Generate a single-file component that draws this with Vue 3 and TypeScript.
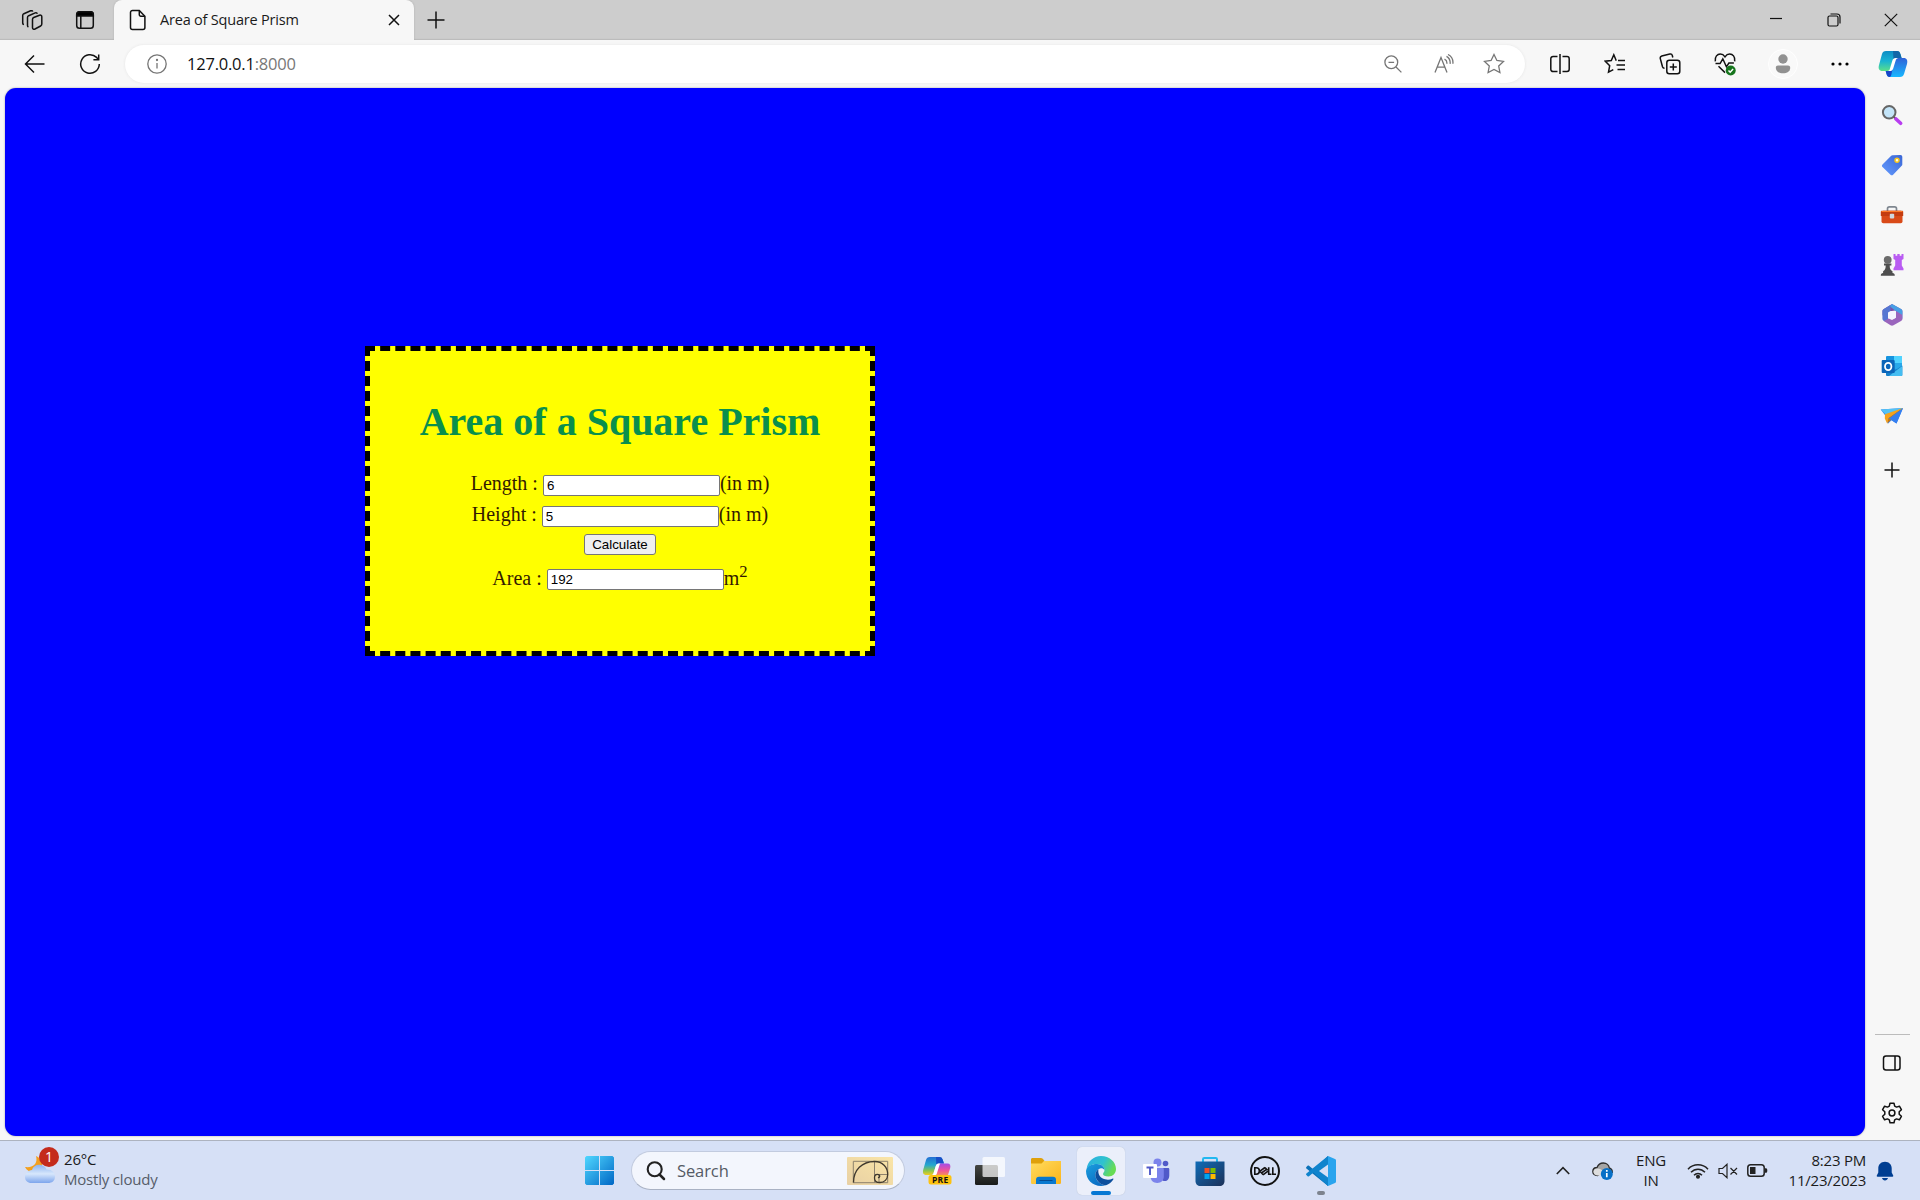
<script setup lang="ts">
import { ref } from 'vue'

const length = ref('6')
const height = ref('5')
const area = ref('192')

function calculate(): void {
  const a = Number(length.value)
  const h = Number(height.value)
  area.value = String(2 * a * a + 4 * a * h)
}
</script>

<template>
  <div class="desktop">
    <header class="tabstrip">
      <div class="strip-icon first">
        <svg width="22" height="22" viewBox="0 0 22 22" class="line">
          <path d="M11.500 10.300c0-.9.500-1.500 1.200-1.800l5.800-2.300c1.200-.4 2.300.3 2.300 1.600v7.300c0 .8-.4 1.500-1.200 1.900l-5.600 3c-1.200.6-2.500 0-2.500-1.300z" />
          <path d="M7.400 18a1.700 1.700 0 0 1-.9-1.500V8.600c0-.8.400-1.500 1.200-1.900l6.500-2.800c1-.4 1.900 0 2.100.8" />
          <path d="M2.900 15.600a1.700 1.700 0 0 1-1.200-1.500V6.600c0-.8.400-1.500 1.200-1.900l6.700-2.900c1-.4 1.900 0 2.100.8" />
        </svg>
      </div>
      <div class="strip-icon second">
        <svg width="20" height="20" viewBox="0 0 20 20" class="line">
          <rect x="1.700" y="1.700" width="16.600" height="16.600" rx="2.800" />
          <path d="M1.700 6V4.500a2.800 2.800 0 0 1 2.800-2.800h11a2.800 2.800 0 0 1 2.800 2.800V6z" fill="#000" />
          <path d="M5.800 6v12" />
        </svg>
      </div>
      <div class="tab">
        <svg class="file line" width="18" height="22" viewBox="0 0 18 22">
          <path d="M3.500 1.500h6.800l5.600 5.700v11.300a2 2 0 0 1-2 2H3.500a2 2 0 0 1-2-2v-15a2 2 0 0 1 2-2z" />
          <path d="M10.300 1.500v4.200a1.500 1.500 0 0 0 1.500 1.500h4.100" />
        </svg>
        <span class="tab-title">Area of Square Prism</span>
        <svg class="tab-close line" width="12" height="12" viewBox="0 0 12 12"><path d="m1 1 10 10M11 1 1 11" /></svg>
      </div>
      <svg class="plus line" width="18" height="18" viewBox="0 0 18 18"><path d="M9 .5v17M.5 9h17" /></svg>
      <div class="window-buttons">
        <span><svg width="12" height="12" viewBox="0 0 12 12" class="line thin"><path d="M0 5.500h12" /></svg></span>
        <span><svg width="14" height="14" viewBox="0 0 14 14" class="line thin"><rect x="1" y="3" width="10" height="10" rx="1.500" /><path d="M3.500 1h6.500a3 3 0 0 1 3 3v6.500" /></svg></span>
        <span><svg width="14" height="14" viewBox="0 0 14 14" class="line thin"><path d="m.8.8 12.400 12.400M13.200.8.8 13.200" /></svg></span>
      </div>
    </header>

    <nav class="toolbar">
      <span class="tool"><svg width="22" height="20" viewBox="0 0 22 20" class="line"><path d="M20.500 10H1.500M10 1.500 1.500 10l8.500 8.500" /></svg></span>
      <span class="tool"><svg width="22" height="22" viewBox="0 0 22 22" class="line"><path d="M20.300 11a9.300 9.300 0 1 1-2.700-6.600L19.500 6.500M19.700 1.500v5.300h-5.300" /></svg></span>
      <div class="address">
        <svg class="info line grey" width="20" height="20" viewBox="0 0 20 20"><circle cx="10" cy="10" r="9.200" /><path d="M10 9v5.500" /><circle cx="10" cy="6" r=".5" fill="#6c6c6c" /></svg>
        <span class="url">127.0.0.1<span class="port">:8000</span></span>
        <div class="address-icons">
          <svg width="18" height="18" viewBox="0 0 18 18" class="line grey"><circle cx="7.300" cy="7.300" r="6.400" /><path d="m12 12 5.400 5.400M4.500 7.300h5.600" /></svg>
          <svg width="20" height="20" viewBox="0 0 20 20" class="line grey"><path d="M1 18.500 7 3.500l6 15M3.300 13.200h7.500M10.500 5.200c1.800.9 2.600 2.500 2.400 4.500M12.500 2.400c2.800 1.600 4 4.300 3.600 7.500M14 .5c3.600 1.800 5.300 5.200 4.900 9.300" /></svg>
          <svg width="22" height="22" viewBox="0 0 22 22" class="line grey"><path d="m11 1.500 2.900 6 6.600.9-4.800 4.600 1.200 6.500-5.900-3.100-5.900 3.100 1.200-6.500L1.500 8.400l6.600-.9z" /></svg>
        </div>
      </div>
      <div class="tools-right">
        <span class="tool"><svg width="22" height="22" viewBox="0 0 22 22" class="line"><path d="M11 1v20M8.500 3.500H4A2.200 2.200 0 0 0 1.800 5.700v10.600A2.200 2.200 0 0 0 4 18.500h4.500M13.500 3.500H18a2.200 2.200 0 0 1 2.200 2.200v10.600a2.200 2.200 0 0 1-2.200 2.200h-4.500" /></svg></span>
        <span class="tool"><svg width="22" height="22" viewBox="0 0 22 22" class="line"><path d="M12.500 7.300h-.4L9.800 1.800 7.300 7.500l-6 .7 4.400 4.500-1.200 6.500 4.800-2.600M14 7.500h7M12.500 12H21M13.500 16.500H21" /></svg></span>
        <span class="tool"><svg width="22" height="22" viewBox="0 0 22 22" class="line"><rect x="7.800" y="7.300" width="13" height="13.500" rx="2.500" /><path d="M14.300 10.500v7M10.800 14h7M5.500 15.300c-1.300 0-1.700-.6-2-1.500L1.300 5.600c-.3-1.300.3-2.200 1.500-2.600l8-2c1.200-.3 2.200.3 2.500 1.500l.5 2" /></svg></span>
        <span class="tool"><svg width="22" height="24" viewBox="0 0 22 24" class="line"><path d="M1.300 9.300C.6 4.500 3.400 2 6.300 2c2 0 3.500 1 4.700 2.800C12.200 3 13.700 2 15.700 2c2.900 0 5.700 2.500 5 7.300M1.500 11.500h4.600l2.700-4.700 3.600 8 2.500-3.800h5M4.500 14.300l6.500 6.300" /><circle cx="16.700" cy="18.500" r="5" fill="#16751d" stroke="none" /><path d="m14.500 18.500 1.700 1.700 2.900-3.200" stroke="#fff" /></svg></span>
        <span class="tool profile"><i><svg width="16" height="20" viewBox="0 0 16 20" fill="#919191"><circle cx="8" cy="5" r="4.700" /><path d="M3 11.500h10c1.300 0 2.200.9 2.200 2.200 0 3.600-3.200 5.600-7.200 5.600S.8 17.300.8 13.700C.8 12.400 1.700 11.500 3 11.500z" /></svg></i></span>
        <span class="tool dots"><svg width="18" height="4" viewBox="0 0 18 4"><circle cx="2" cy="2" r="1.600" /><circle cx="9" cy="2" r="1.600" /><circle cx="16" cy="2" r="1.600" /></svg></span>
        <span class="tool copilot">
          <svg width="30" height="28" viewBox="0 0 30 28">
            <defs>
              <linearGradient id="cpA" x1="0" y1="0" x2="0" y2="1"><stop offset="0" stop-color="#0d8cc4" /><stop offset=".5" stop-color="#19b3d3" /><stop offset="1" stop-color="#5be08a" /></linearGradient>
              <linearGradient id="cpB" x1="0" y1="0" x2="0" y2="1"><stop offset="0" stop-color="#2f62d8" /><stop offset="1" stop-color="#18b8ff" /></linearGradient>
            </defs>
            <path d="M8 1h11c2 0 2.800 1 3.400 3l1.200 4h-4.400c-2 0-3 1-3.600 3l-2.200 7.500c-.6 1.800-1.600 2.500-3.400 2.500H4.500C1 21 0 18.500 1 15L4 4c.6-2 1.800-3 4-3z" fill="url(#cpA)" />
            <path d="M15 1h4c2 0 2.800 1 3.400 3l1.200 4h-4.400c-2 0-2.900.8-3.600 3z" fill="#1267a8" />
            <path d="M22 27H12c-2 0-3-1-3.500-3l-.8-3H11c1.700 0 2.700-.8 3.200-2.500L16.700 11c.6-2 1.600-3 3.500-3h5.300c3.500 0 4.400 2.600 3.500 6l-3 10c-.6 2-1.800 3-4 3z" fill="url(#cpB)" />
            <path d="M7.700 21H11c1.700 0 2.700-.8 3.200-2.500L15 16l-1.500 8c-.3 2-1 3-2 3-1.600 0-2.500-1-3-3z" fill="#1746c7" />
            <path d="M14.300 10.800c.6-1.900 1.600-2.800 3.400-2.800h2.600c-1.600.2-2.200 1.200-2.700 2.700l-2.300 7.500c-.6 1.900-1.600 2.800-3.300 2.800H9.800c1.200-.2 1.700-1 2.100-2.300z" fill="#fff" />
          </svg>
        </span>
      </div>
    </nav>

    <main class="main">
      <section class="page">
        <form class="card" @submit.prevent="calculate">
          <h1>Area of a Square Prism</h1>
          <div class="row"><label>Length :</label><input v-model="length" type="text" /><span>(in m)</span></div>
          <div class="row second-row"><label>Height :</label><input v-model="height" type="text" /><span>(in m)</span></div>
          <div class="action"><button type="submit">Calculate</button></div>
          <div class="row"><label>Area :</label><input v-model="area" class="result" type="text" /><span>m<sup>2</sup></span></div>
        </form>
      </section>

      <aside class="sidebar">
        <span class="side"><svg width="22" height="22" viewBox="0 0 22 22"><path d="m12.500 12.500 3 3" stroke="#555" stroke-width="2" /><path d="m15 15 4.600 4.300" stroke="#b83df0" stroke-width="3.600" stroke-linecap="round" /><circle cx="8.200" cy="8.300" r="6.300" fill="#c3e4f8" stroke="#666" stroke-width="2" /></svg></span>
        <span class="side"><svg width="22" height="22" viewBox="0 0 22 22"><defs><linearGradient id="tag" x1="1" y1="0" x2="0" y2="1"><stop stop-color="#3a66d5" /><stop offset="1" stop-color="#649bff" /></linearGradient></defs><path d="M11.500 1.200 19.500 1a1.800 1.800 0 0 1 1.800 1.800v7.700c0 .5-.2 1-.6 1.300l-8.600 8.900c-.8.8-1.800.8-2.600 0l-8-7.700c-.8-.8-.8-1.800 0-2.600l8.700-8.600c.4-.4.800-.6 1.300-.6z" fill="url(#tag)" /><circle cx="16" cy="6.200" r="2" fill="#ffd" stroke="#f8c41d" stroke-width="1.500" /></svg></span>
        <span class="side"><svg width="24" height="20" viewBox="0 0 24 20"><path d="M7.500 6V3.700c0-1.200.7-1.900 1.900-1.900h5.200c1.200 0 1.900.7 1.900 1.900V6" fill="none" stroke="#7f8790" stroke-width="1.700" /><rect x="1.500" y="5.800" width="21" height="12.400" rx="1.800" fill="#d94a18" /><path d="M.8 7c0-.8.500-1.200 1.200-1.200h20c.7 0 1.200.4 1.200 1.200v4H.8z" fill="#c43c10" /><path d="M1.500 6h21v1h-21z" fill="#ff7a28" /><rect x="9.800" y="8.700" width="4.400" height="4.800" rx="1" fill="#cfd8df" /></svg></span>
        <span class="side"><svg width="24" height="24" viewBox="0 0 24 24"><path d="M13.500 1h2v1.800h1.800V1h2.400v1.800h1.800V1h2v5l-1.700 1v5.500l1.700 3v1.800h-10v-1.800l1.700-3V7l-1.700-1z" fill="#b95cf2" /><circle cx="7.700" cy="6.800" r="3.900" fill="#6b6b6b" /><path d="M4 10.500h7.400v2H9.700c0 3 .6 4.600 2.800 5.700V20c1.500.4 2.300 1 2.300 2.700H.8c0-1.700.8-2.300 2.300-2.700v-1.800c2-1.100 2.600-2.700 2.600-5.700H4z" fill="#4e4e4e" /></svg></span>
        <span class="side"><svg width="22" height="24" viewBox="0 0 22 24"><path d="m11 1 9 5c1 .6 1.400 1.300 1.400 2.300V12l-7-4.500L7 8.500v6.700l-5.500-3V8.300c0-1 .4-1.700 1.400-2.300z" fill="#7b50a9" /><path d="m11 1 9 5c1 .6 1.400 1.300 1.400 2.300v7.400L15 12.500V8.300L8.500 3z" fill="#479fe5" /><path d="M1.400 8.300c0-1 .4-1.700 1.400-2.300L9.500 2v6.300L7 9.500v6l2 4-6.200-1.600c-1-.6-1.400-1.300-1.400-2.300z" fill="#5577d2" /><path d="M21.400 12v3.700c0 1-.4 1.700-1.400 2.300L12.500 22.300c-1 .6-2 .6-3 0L2.800 18l5-2.600 3.200 1.700 4-2.300V8z" fill="#9a65bd" /><circle cx="11" cy="12" r="3.900" fill="#f5f5ff" /></svg></span>
        <span class="side"><svg width="22" height="22" viewBox="0 0 22 22"><rect x="5" y="1" width="16" height="16" rx="1" fill="#1794df" /><path d="M13 1h8v7h-8z" fill="#50d3ff" /><path d="M13 8h8v6h-8z" fill="#28a8ea" /><path d="M5 10.500 13 16l8.300-5.500V20a1 1 0 0 1-1 1H6a1 1 0 0 1-1-1z" fill="#157fca" /><path d="m8 21 13.300-10V20a1 1 0 0 1-1 1z" fill="#45bdf1" /><rect x=".7" y="5" width="13" height="13" rx="1" fill="#0b65b9" /><ellipse cx="7.200" cy="11.500" rx="3.200" ry="3.600" fill="none" stroke="#fff" stroke-width="1.800" /></svg></span>
        <span class="side"><svg width="24" height="20" viewBox="0 0 24 20"><path d="M.7 3.500 23 2l-6.500 15.500-5-3.200-3.600 3.400-1-6z" fill="#3486ef" /><path d="M.7 3.500 23 2 6.900 9.700z" fill="#54c2f4" /><path d="m5 8.300 18-6.200L8.800 12l-1.700 5.600-2.300-5z" fill="#f6a31b" /><path d="m8.700 12 14-9.700L7.200 17.600z" fill="#ce7608" /><path d="m9 12.400 14-10.200-6.500 15.300z" fill="#347ff1" /></svg></span>
        <span class="side side-plus"><svg width="16" height="16" viewBox="0 0 16 16" class="line"><path d="M8 .5v15M.5 8h15" /></svg></span>
        <hr />
        <span class="side"><svg width="20" height="18" viewBox="0 0 20 18" class="line"><rect x="1.500" y="2" width="16.500" height="14" rx="2.500" /><path d="M13 2v14" /></svg></span>
        <span class="side"><svg width="22" height="22" viewBox="0 0 22 22" class="line"><circle cx="11" cy="11" r="2.900" /><path d="M9 1.200h4l.7 2.900 1.800 1 2.900-.9 2 3.500-2.200 2.100v2.400l2.200 2.100-2 3.500-2.900-.9-1.800 1-.7 2.900H9l-.7-2.900-1.800-1-2.900.9-2-3.500 2.200-2.100V9.800L1.600 7.700l2-3.500 2.900.9 1.800-1z" stroke-linejoin="round" /></svg></span>
      </aside>
    </main>

    <footer class="taskbar">
      <div class="weather">
        <div class="weather-icon">
          <svg width="32" height="32" viewBox="0 0 32 32"><defs><linearGradient id="cloud" x1="0" y1="0" x2="0" y2="1"><stop stop-color="#8eb4ef" /><stop offset=".5" stop-color="#d7e7fc" /><stop offset="1" stop-color="#7da5ec" /></linearGradient></defs><path d="M12 2c2 7-2 12-11 11 2 4 6 6 10 5 6-1 9-7 6-12-1-2-3-3-5-4z" fill="#f3a01f" /><path d="M8 16C9 12 13 10 17 11c3 .6 5 2.500 5.500 4.500C27 15 31 18 31 22.500S28 29 24 29H7.500C3.500 29 1 26.500 1 23s3-6.500 7-7z" fill="url(#cloud)" /></svg>
          <b class="badge">1</b>
        </div>
        <div class="lines"><span class="temp">26°C</span><span class="sky">Mostly cloudy</span></div>
      </div>

      <div class="apps">
        <svg class="start" width="29" height="29" viewBox="0 0 29 29"><defs><linearGradient id="win" x1="0" y1="0" x2="1" y2="1"><stop stop-color="#50d7ff" /><stop offset="1" stop-color="#0067c5" /></linearGradient></defs><path d="M1.500 0H14v14H0V1.500zM15 0h12.500L29 1.500V14H15zM0 15h14v14H1.500L0 27.500zM15 15h14v12.500L27.500 29H15z" fill="url(#win)" /></svg>
        <div class="search">
          <svg width="20" height="20" viewBox="0 0 20 20" fill="none" stroke="#222" stroke-width="2.100"><circle cx="8.700" cy="8.300" r="7" /><path d="m13.500 13.500 4.500 4.500" stroke-linecap="round" stroke-width="2.500" /></svg>
          <span>Search</span>
          <svg class="spiral" width="46" height="28" viewBox="0 0 46 28"><defs><linearGradient id="sand" x1="0" y1="1" x2="1" y2="0"><stop stop-color="#e8d0a4" /><stop offset="1" stop-color="#fae5a7" /></linearGradient></defs><rect width="46" height="28" rx="1" fill="url(#sand)" /><path d="M6.300 4.300h34.400v21.400H6.300zM27.500 4.300v21.400M27.500 17.500h13.200M32 17.500v8" fill="none" stroke="#8d816c" /><path d="M6.500 25.500C6.500 13 15 4.500 27.500 4.500c8 0 13.200 5.500 13.200 13 0 5-3.500 8-7.700 8-3.500 0-5.500-2-5.500-4.600 0-2.200 1.500-3.500 3-3.500s2.300 1 2.200 2c-.1.900-1 1.300-1.700 1" fill="none" stroke="#40392e" stroke-width="1.300" /></svg>
        </div>
        <svg class="pre" width="30" height="30" viewBox="0 0 30 30">
          <defs>
            <linearGradient id="pa" x1="0" y1="0" x2="0" y2="1"><stop stop-color="#246fd3" /><stop offset=".45" stop-color="#25a8cf" /><stop offset=".75" stop-color="#86c452" /><stop offset="1" stop-color="#f2cc20" /></linearGradient>
            <linearGradient id="pb" x1="0" y1="0" x2="0" y2="1"><stop stop-color="#a44be8" /><stop offset=".6" stop-color="#ef5499" /><stop offset="1" stop-color="#f68b5a" /></linearGradient>
          </defs>
          <path d="M8 1h9c2 0 3 .8 3.600 2.500L22 7.500h-5c-2 0-2.700 1-3.200 2.500L11.500 17c-.5 1.500-1.300 2-3 2H4.500C1 19 .5 16.500 1.300 13.500L4 4c.5-2 1.800-3 4-3z" fill="url(#pa)" /><path d="M14 1h3c2 0 3 .8 3.600 2.500L22 7.500h-5c-1.500 0-2.200.5-2.700 1.500z" fill="#174fc7" /><path d="M18 7.500h7.500c2.500 0 3.400 1.800 2.700 4.500L26 19H12c1.500 0 2-1 2.400-2l2-7c.4-1.500.8-2 1.600-2.500z" fill="url(#pb)" /><path d="M16.500 7.500c-1.500 0-2.200 1-2.700 2.500l-2.300 7.500c-.3 1-.8 1.500-1.500 1.500h3.500c.8 0 1.200-1 1.500-2l2.500-8c.2-.8.500-1.200 1-1.500z" fill="#fff" />
          <rect x="6.500" y="19" width="23" height="9.500" rx="2.500" fill="#fdc20f" /><text x="18.200" y="26.800" text-anchor="middle" class="pre-text">PRE</text>
        </svg>
        <svg class="task-view" width="30" height="28" viewBox="0 0 30 28"><defs><linearGradient id="tv" x1="0" y1="0" x2="0" y2="1"><stop stop-color="#444642" /><stop offset="1" stop-color="#191b1a" /></linearGradient></defs><rect y="8" width="23" height="20" rx="1.500" fill="url(#tv)" /><rect x="7.500" width="22.500" height="20" rx="1.500" fill="#fff" opacity=".72" /></svg>
        <svg class="folder" width="30" height="28" viewBox="0 0 30 28"><defs><linearGradient id="fo" x1="0" y1="0" x2="1" y2="1"><stop stop-color="#ffdc60" /><stop offset="1" stop-color="#fbb41a" /></linearGradient></defs><path d="M0 2.500C0 1.500.7 1 1.500 1h8.200c1 0 1.700.3 2.300 1l1.500 2H28c1.300 0 2 .7 2 2v8H0z" fill="#dfa00b" /><path d="M0 6.500h10.500L13 4h17v21.500c0 1-.7 1.500-1.500 1.500h-27C.7 27 0 26.500 0 25.500z" fill="url(#fo)" /><path d="M5 27v-4c0-2 1-3.200 3-3.200h14c2 0 3 1.200 3 3.200v4z" fill="#0878cf" /><path d="M8.500 23.500h13" stroke="#044b91" /></svg>
        <div class="app-cell active">
          <svg width="30" height="30" viewBox="0 0 30 30">
            <defs>
              <linearGradient id="ea" x1="0" y1="0" x2="1" y2=".4"><stop stop-color="#2baee3" /><stop offset=".6" stop-color="#2fc2cf" /><stop offset="1" stop-color="#67dc54" /></linearGradient>
              <linearGradient id="eb" x1="0" y1="0" x2=".6" y2="1"><stop stop-color="#1b9fde" /><stop offset="1" stop-color="#0a6cc4" /></linearGradient>
            </defs>
            <path d="M.6 13C1.500 5.500 7.500 0 15 0c8.500 0 15 6 15 13 0 4.500-3.300 7.500-7.500 7.500-3.600 0-5.500-1.200-5.500-2.500 0-1.200 1.500-1.800 1.500-4C18.500 11 15.500 8 11 8 6 8 2.500 10 .6 13z" fill="url(#ea)" />
            <path d="M0 15C.4 10.500 5.500 8 11 8c4.500 0 7.500 3 7.500 6-1-1.300-2.500-2-4.300-1.600C10 13.500 8.300 18 10.200 22.500c1.600 4 5.300 6.500 9.300 6.800-1.400.5-3 .7-4.500.7C6.500 30 0 23.500 0 15z" fill="url(#eb)" />
            <path d="M12.500 13.200c-3 2-4 5.500-2.300 9.300 2 4.500 6.300 7 9.800 6.700 3-1 5.800-3.200 7.300-5.700.4-.7-.2-1.200-.9-.8-2 1-4.700 1.300-7.400.6-4.700-1.200-7.500-5.300-6.500-10.100z" fill="#0d4f9d" />
          </svg>
          <i class="running wide"></i>
        </div>
        <svg class="teams" width="28" height="26" viewBox="0 0 28 26"><circle cx="15.500" cy="4.500" r="4" fill="#7b83eb" /><circle cx="23.500" cy="5.500" r="2.800" fill="#5059c9" /><path d="M18 10h8c.8 0 1.300.5 1.300 1.300V17c0 4-2 6-4.500 6S18 21 18 18z" fill="#5059c9" /><path d="M8.500 10h12c.8 0 1.300.5 1.300 1.300v7c0 4.200-2.700 6.700-6.600 6.700s-6.700-2.500-6.700-6.700z" fill="#7b83eb" /><rect x="1" y="6" width="14" height="14" rx="1" fill="#fff" /><path d="M4.500 9.500h7M8 9.500V17" stroke="#5059c9" stroke-width="1.900" /></svg>
        <svg class="store" width="30" height="30" viewBox="0 0 30 30"><defs><linearGradient id="st" x1="0" y1="0" x2="1" y2="1"><stop stop-color="#0f6cb8" /><stop offset="1" stop-color="#1d3158" /></linearGradient></defs><path d="M8 6V3.300C8 2.400 8.600 2 9.300 2h11.400c.7 0 1.300.4 1.300 1.300V6" fill="none" stroke="#22b8f0" stroke-width="2" /><path d="M.5 5.500h29V25c0 3-2 5-5 5h-19c-3 0-5-2-5-5z" fill="url(#st)" /><path d="M9.500 12h5v5h-5z" fill="#f25022" /><path d="M15.500 12h5v5h-5z" fill="#7fba00" /><path d="M9.500 18h5v5h-5z" fill="#00a4ef" /><path d="M15.500 18h5v5h-5z" fill="#ffb900" /></svg>
        <svg class="dell" width="30" height="30" viewBox="0 0 30 30" fill="none" stroke="#111" stroke-width="2"><circle cx="15" cy="15" r="14" /><path d="M4.800 11.800v6.400h1.300c2.200 0 3.300-1.200 3.300-3.200s-1.100-3.200-3.300-3.200zM10 15.200l5-3.700M11.500 17l5-3.700M13 18.800l5-3.700M10 15.200l3.200 3.600M15 11.500l2.500 2.700M18.700 11.300v7h2.800M22.800 11.300v7h3.200" stroke-width="1.600" /></svg>
        <div class="app-cell code">
          <svg width="30" height="30" viewBox="0 0 30 30"><path d="M22 0 7.500 13.500 3 9.800c-.5-.4-1-.4-1.400 0L.4 11c-.5.500-.5 1 0 1.500L22 30z" fill="#0b72b8" /><path d="M22 30 7.500 16.500 3 20.200c-.5.4-1 .4-1.400 0L.4 19c-.5-.5-.5-1 0-1.500L22 0z" fill="#1084cd" /><path d="M22 8.500 13 15l9 6.500z" fill="#d7e0f6" /><path d="M22 0 29 3c.7.300 1 .8 1 1.500v21c0 .7-.3 1.200-1 1.500l-7 3z" fill="#29a4ee" /></svg>
          <i class="running"></i>
        </div>
      </div>

      <div class="tray">
        <svg class="chevron" width="14" height="9" viewBox="0 0 14 9" fill="none" stroke="#222" stroke-width="1.600"><path d="m.8 8 6.200-6.300L13.200 8" /></svg>
        <svg class="onedrive" width="22" height="20" viewBox="0 0 22 20"><path d="M5 6.500C6.200 3.500 8.500 2 11.300 2c3.300 0 5.700 2.200 6 5 2 .5 3 2 3 4.300H10l-4.500 3.300C2.500 14.300.8 12.500.8 10.500.8 8.300 2.500 6.600 5 6.500z" fill="#a5a5a5" stroke="#2d2d2d" stroke-width="1.300" /><path d="M1.500 10.500C1.800 8 5 6.500 8 8l5 3-5 3.500H5c-2.300-.3-3.500-1.700-3.500-4z" fill="#ddd" /><circle cx="14.800" cy="13" r="6" fill="#0870c7" /><path d="M14.800 12v4.300M14.800 9v1.700" stroke="#fff" stroke-width="1.700" /></svg>
        <div class="lines lang"><span>ENG</span><span>IN</span></div>
        <svg class="wifi" width="22" height="16" viewBox="0 0 22 16" fill="none" stroke="#222" stroke-width="1.500"><path d="M1 6.200C6.500.3 15.500.3 21 6.200M4 9.300c4-4.200 10-4.200 14 0M7 12.200c2.300-2.400 5.700-2.400 8 0" /><circle cx="11" cy="13.800" r="1.300" fill="#222" /></svg>
        <svg class="speaker" width="20" height="16" viewBox="0 0 20 16" fill="none" stroke="#222" stroke-width="1.200"><path d="M1 5.500h3.500L9 1.300v13.400L4.500 10.500H1zM12.500 5l6.500 6.500M19 5l-6.500 6.500" /></svg>
        <svg class="battery" width="21" height="13" viewBox="0 0 21 13"><rect x=".8" y=".8" width="16.400" height="11.400" rx="2.800" fill="none" stroke="#222" stroke-width="1.500" /><path d="M3 3h5.500v7H3zM18 4.200h1c.8 0 1.300.8 1.300 2.300s-.5 2.300-1.300 2.300h-1z" fill="#222" /></svg>
        <div class="lines clock"><span class="time">8:23 PM</span><span class="date">11/23/2023</span></div>
        <svg class="bell" width="18" height="20" viewBox="0 0 18 20" fill="#003e92"><path d="M9 .7c4 0 6.700 2.800 6.700 6.600v4.300l1.500 3c.3.700 0 1.200-.7 1.200h-15c-.7 0-1-.5-.7-1.200l1.500-3V7.300C2.300 3.500 5 .7 9 .7zM6 17h6c-.4 1.600-1.500 2.400-3 2.400S6.400 18.600 6 17z" /></svg>
      </div>
    </footer>
  </div>
</template>

<style>
body {
  overflow: hidden;
}
</style>

<style scoped>
.desktop {
  width: 1920px;
  height: 1200px;
  display: flex;
  flex-direction: column;
  background: #f7f7f7;
  font-family: "Open Sans", "Noto Sans", sans-serif;
  color: #1b1b1b;
}
.desktop *, .desktop { box-sizing: border-box; }
svg { display: block; flex: none; }
.line { fill: none; stroke: #111; stroke-width: 1.5; }
.thin { stroke-width: 1.200; }
.grey { stroke: #757575; stroke-width: 1.300; }

.tabstrip {
  height: 40px;
  flex: none;
  display: flex;
  align-items: center;
  background: #cdcdcd;
  box-shadow: inset 0 -2px 1px -1px #bbb;
}
.first { margin-left: 21px; }
.second { margin-left: 32px; width: 20px; }
.tab {
  width: 300px;
  height: 40px;
  margin-left: 19px;
  padding: 0 14px 0 15px;
  display: flex;
  align-items: center;
  background: #f7f7f7;
  border-radius: 8px 8px 0 0;
  box-shadow: 0 0 2px #aaa;
  clip-path: inset(0 -3px 0 -3px);
}
.tab-title { margin-left: 13px; padding-bottom: 2px; font-size: 14.500px; letter-spacing: -.2px; white-space: nowrap; }
.tab-close { margin-left: auto; }
.plus { margin-left: 13px; }
.window-buttons { margin-left: auto; display: flex; }
.window-buttons span { width: 57.500px; display: flex; justify-content: center; }

.toolbar { height: 48px; flex: none; display: flex; align-items: center; padding-left: 7px; }
.tool { width: 55px; display: flex; justify-content: center; }
.address {
  width: 1400px;
  height: 38px;
  margin-left: 8px;
  padding: 0 20px 0 22px;
  display: flex;
  align-items: center;
  background: #fff;
  border-radius: 19px;
  box-shadow: 0 0 3px #e4e4e4;
}
.url { margin-left: 20px; padding-bottom: 2px; font-size: 16.500px; letter-spacing: -.22px; color: #111; }
.port { color: #777; }
.address-icons { margin-left: auto; display: flex; align-items: center; gap: 32px; }
.address-icons svg:last-child { margin-left: -3px; }
.tools-right { display: flex; align-items: center; margin-left: 7px; padding-bottom: 1px; }
.profile { width: 61px; }
.profile i {
  width: 30px;
  height: 30px;
  display: flex;
  align-items: center;
  justify-content: center;
  border: 1px solid #fff;
  border-radius: 50%;
  background: #f9f9f9;
}
.dots { width: 54px; }
.copilot { width: 52px; }

.main { height: 1052px; flex: none; display: flex; padding-left: 5px; }
.page {
  width: 1860px;
  height: 1048px;
  padding: 258px 0 0 360px;
  background: #00f;
  border-radius: 11px;
  box-shadow: 0 0 2px #999;
  font-family: "Liberation Serif", serif;
}
.card {
  width: 510px;
  height: 310px;
  padding-top: 48px;
  border: 5px dashed #000;
  background: #ff0;
  color: #331a00;
  font-size: 20px;
  line-height: 23px;
}
h1 {
  margin: 0 0 27px;
  text-align: center;
  font-size: 40px;
  line-height: 46px;
  font-weight: bold;
  color: #098f4d;
}
.row { height: 23px; display: flex; align-items: baseline; justify-content: center; }
.row label { margin-right: 5px; }
.second-row { margin-top: 8px; }
input {
  width: 177px;
  height: 21px;
  margin: 0;
  padding: 1px 3px;
  border: 1px solid #767676;
  border-radius: 2px;
  background: #fff;
  color: #000;
  font: 13.333px "Liberation Sans", sans-serif;
}
.result { align-self: flex-start; margin-top: 2px; }
.action { display: flex; justify-content: center; margin: 8px 0 12px; }
button {
  width: 72px;
  height: 21px;
  margin: 0;
  padding: 0;
  border: 1px solid #767676;
  border-radius: 3px;
  background: #efefef;
  color: #000;
  font: 13.333px "Liberation Sans", sans-serif;
}
sup { font-size: 16.667px; line-height: 0; vertical-align: super; }

.sidebar { width: 55px; display: flex; flex-direction: column; align-items: center; padding: 2px 1px 0 0; }
.side { height: 50.100px; display: flex; align-items: center; flex: none; }
.side-plus { margin-top: 4px; }
hr { width: 35px; height: 1px; margin: auto 0 3px; border: 0; background: #bcbcbc; }
.sidebar .side:last-child { margin-bottom: 2px; }

.taskbar {
  height: 60px;
  flex: none;
  display: flex;
  align-items: center;
  border-top: 1px solid #adb3bf;
  background: #d6e0f6;
}
.weather { width: 585px; display: flex; padding-left: 24px; }
.weather-icon { position: relative; width: 32px; height: 32px; margin-top: 3px; }
.badge {
  position: absolute;
  left: 15px;
  top: -7px;
  width: 20px;
  height: 20px;
  border-radius: 50%;
  background: #c42b1c;
  color: #fff;
  font-size: 14px;
  font-weight: 500;
  line-height: 19px;
  text-align: center;
}
.lines { display: flex; flex-direction: column; padding-bottom: 2px; font-size: 15px; line-height: 20px; letter-spacing: -.2px; white-space: nowrap; }
.weather .lines { margin: -2px 0 0 8px; }
.sky { color: #565d69; }
.apps { display: flex; align-items: center; }
.search {
  width: 274px;
  height: 39px;
  margin-left: 17px;
  padding: 0 11px 0 14px;
  display: flex;
  align-items: center;
  border: 1px solid #c2cbdf;
  border-bottom-color: #a9b2c4;
  border-radius: 20px;
  background: #f3f6fd;
}
.search span { margin-left: 11px; font-size: 16.500px; letter-spacing: -.1px; color: #555b65; }
.spiral { margin-left: auto; }
.pre { margin-left: 17px; }
.pre-text { font: bold 8.500px "Open Sans", sans-serif; letter-spacing: .3px; fill: #111; }
.task-view { margin-left: 23px; }
.folder { margin-left: 26px; }
.app-cell { width: 48px; height: 48px; display: flex; flex-direction: column; align-items: center; padding-top: 9px; }
.active { margin-left: 16px; border-radius: 5px; background: #ebeffa; box-shadow: 0 0 1px #aeb7ca; }
.running { width: 8px; height: 4px; margin-top: 5px; border-radius: 2px; background: #7d838e; }
.wide { width: 20px; background: #0778d4; }
.teams { margin-left: 17px; }
.store { margin-left: 25px; }
.dell { margin-left: 25px; }
.code { margin-left: 17px; }

.tray { margin-left: auto; display: flex; align-items: center; }
.onedrive { margin-left: 22px; }
.lang { width: 36px; margin-left: 19px; align-items: center; }
.wifi { margin-left: 18px; }
.speaker { margin-left: 9px; }
.battery { margin-left: 9px; }
.clock { width: 90px; margin-left: 8px; align-items: flex-end; letter-spacing: -.22px; }
.bell { margin: 0 26px 0 10px; }
</style>
